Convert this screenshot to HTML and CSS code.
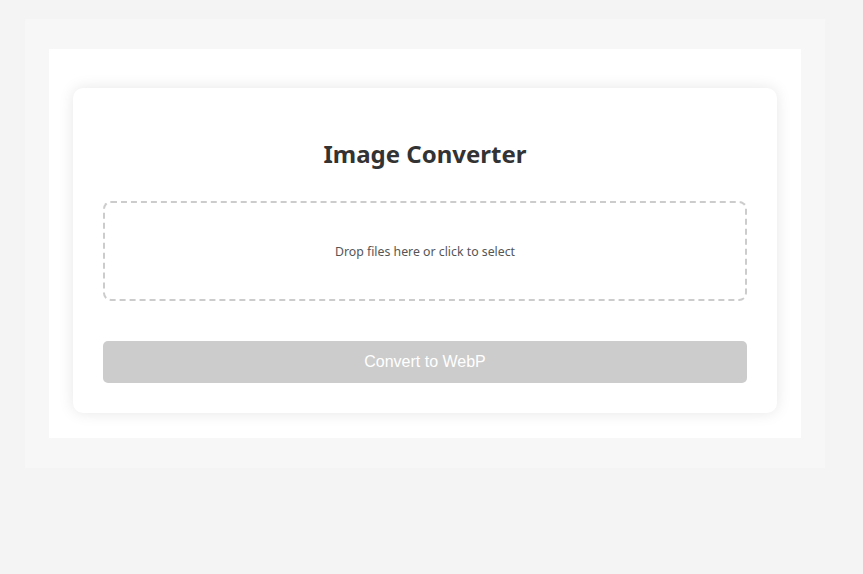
FILE: index.html
```html
<!DOCTYPE html>
<html lang="en">
<head>
<meta charset="utf-8">
<title>Image Converter</title>
<link rel="stylesheet" href="styles.css">
</head>
<body>
<div class="outer">
  <div class="inner">
    <div class="card">
      <h1 class="title">Image Converter</h1>
      <div class="dropzone">Drop files here or click to select</div>
      <button class="convert" disabled>Convert to WebP</button>
    </div>
  </div>
</div>
</body>
</html>
```

FILE: styles.css
```css
html, body {
  margin: 0;
  padding: 0;
}
body {
  background: #f4f4f4;
  padding: 19px 0 0 25px;
  height: 574px;
  box-sizing: border-box;
  font-family: "Noto Sans", "Open Sans", sans-serif;
}
.outer {
  width: 800px;
  box-sizing: border-box;
  background: #f7f7f7;
  padding: 30px 24px;
}
.inner {
  background: #ffffff;
  padding: 39px 24px 25px;
}
.card {
  background: #ffffff;
  border-radius: 10px;
  box-shadow: 0 0 15px rgba(0, 0, 0, 0.1);
  padding: 35px 30px 30px;
  display: flex;
  flex-direction: column;
}
.title {
  margin: 15px 0 31px;
  font-size: 24px;
  line-height: 32px;
  font-weight: 700;
  color: #333333;
  text-align: center;
}
.dropzone {
  height: 100px;
  box-sizing: border-box;
  border: 2px dashed #cccccc;
  border-radius: 8px;
  display: flex;
  align-items: center;
  justify-content: center;
  font-size: 12.3px;
  color: #555555;
  margin-bottom: 40px;
}
.convert {
  height: 42px;
  border: none;
  border-radius: 5px;
  background: #cccccc;
  color: #ffffff;
  font-family: "Liberation Sans", Arial, sans-serif;
  font-size: 16px;
  padding: 0;
}
```
